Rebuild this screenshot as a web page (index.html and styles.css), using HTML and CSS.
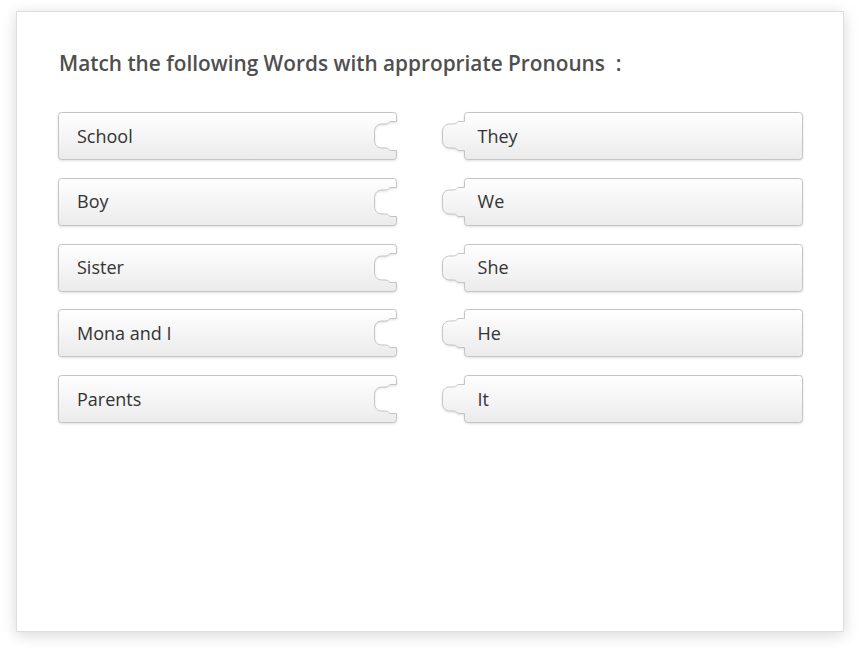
FILE: index.html
```html
<!DOCTYPE html>
<html lang="en">
<head>
<meta charset="utf-8">
<title>Match the following</title>
<link rel="stylesheet" href="styles.css">
</head>
<body>
<svg class="defs" width="0" height="0" aria-hidden="true">
  <defs>
    <linearGradient id="tileGrad" x1="0" y1="0" x2="0" y2="1">
      <stop offset="0" stop-color="#ffffff"/>
      <stop offset="1" stop-color="#ebebeb"/>
    </linearGradient>
    <path id="leftShape" d="M3.5 0.5H335.5Q338.5 0.5 338.5 3.5V9.5H333C330.5 9.5 331 12 327.5 12H324C319.5 12 316.5 15 316.5 19.5V28.5C316.5 33 319.5 36 324 36H327.5C331 36 330.5 38.5 333 38.5H338.5V44.5Q338.5 47.5 335.5 47.5H3.5Q0.5 47.5 0.5 44.5V3.5Q0.5 0.5 3.5 0.5Z"/>
    <path id="rightShape" d="M25.5 0.5H357.5Q360.5 0.5 360.5 3.5V44.5Q360.5 47.5 357.5 47.5H25.5Q22.5 47.5 22.5 44.5V38.5H17C14.5 38.5 15 36 11.5 36H8C3.5 36 0.5 33 0.5 28.5V19.5C0.5 15 3.5 12 8 12H11.5C15 12 14.5 9.5 17 9.5H22.5V3.5Q22.5 0.5 25.5 0.5Z"/>
  </defs>
</svg>
<div class="card">
  <h1 class="title">Match the following Words with appropriate Pronouns&nbsp; :</h1>
  <div class="rows">
    <div class="pair">
      <div class="tile tile-left">
        <svg class="shape" viewBox="0 0 339 48" width="339" height="48"><use href="#leftShape"/></svg>
        <span class="label">School</span>
      </div>
      <div class="tile tile-right">
        <svg class="shape" viewBox="0 0 361 48" width="361" height="48"><use href="#rightShape"/></svg>
        <span class="label">They</span>
      </div>
    </div>
    <div class="pair">
      <div class="tile tile-left">
        <svg class="shape" viewBox="0 0 339 48" width="339" height="48"><use href="#leftShape"/></svg>
        <span class="label">Boy</span>
      </div>
      <div class="tile tile-right">
        <svg class="shape" viewBox="0 0 361 48" width="361" height="48"><use href="#rightShape"/></svg>
        <span class="label">We</span>
      </div>
    </div>
    <div class="pair">
      <div class="tile tile-left">
        <svg class="shape" viewBox="0 0 339 48" width="339" height="48"><use href="#leftShape"/></svg>
        <span class="label">Sister</span>
      </div>
      <div class="tile tile-right">
        <svg class="shape" viewBox="0 0 361 48" width="361" height="48"><use href="#rightShape"/></svg>
        <span class="label">She</span>
      </div>
    </div>
    <div class="pair">
      <div class="tile tile-left">
        <svg class="shape" viewBox="0 0 339 48" width="339" height="48"><use href="#leftShape"/></svg>
        <span class="label">Mona and I</span>
      </div>
      <div class="tile tile-right">
        <svg class="shape" viewBox="0 0 361 48" width="361" height="48"><use href="#rightShape"/></svg>
        <span class="label">He</span>
      </div>
    </div>
    <div class="pair">
      <div class="tile tile-left">
        <svg class="shape" viewBox="0 0 339 48" width="339" height="48"><use href="#leftShape"/></svg>
        <span class="label">Parents</span>
      </div>
      <div class="tile tile-right">
        <svg class="shape" viewBox="0 0 361 48" width="361" height="48"><use href="#rightShape"/></svg>
        <span class="label">It</span>
      </div>
    </div>
  </div>
</div>
</body>
</html>
```

FILE: styles.css
```css
html, body {
  margin: 0;
  padding: 0;
  background: #ffffff;
}

body {
  font-family: "Open Sans", "Liberation Sans", sans-serif;
  width: 861px;
  height: 653px;
  overflow: hidden;
}

.defs {
  position: absolute;
  width: 0;
  height: 0;
}

.card {
  box-sizing: border-box;
  margin: 11px 0 0 16px;
  width: 828px;
  height: 621px;
  border: 1px solid #dedede;
  background: #ffffff;
  box-shadow: 0 3px 14px rgba(0, 0, 0, 0.16);
  padding: 0 41px;
}

.title {
  margin: 37px 0 0 1px;
  font-size: 20.8px;
  line-height: 28px;
  font-weight: 600;
  color: #4f4f4f;
  letter-spacing: 0;
}

.rows {
  margin-top: 35px;
  display: flex;
  flex-direction: column;
  gap: 17.75px;
}

.pair {
  display: flex;
  align-items: center;
  gap: 45px;
}

.tile {
  position: relative;
  height: 48px;
  display: flex;
  align-items: center;
}

.tile-left {
  width: 339px;
}

.tile-right {
  width: 361px;
}

.shape {
  position: absolute;
  left: 0;
  top: 0;
  filter: drop-shadow(0 1px 1px rgba(0, 0, 0, 0.12));
}

.shape use {
  fill: url(#tileGrad);
  stroke: #c4c4c4;
  stroke-width: 1;
}

.label {
  position: relative;
  font-size: 18px;
  color: #333333;
  line-height: 24px;
  margin-top: -1px;
}

.tile-left .label {
  padding-left: 19px;
}

.tile-right .label {
  padding-left: 36px;
}
```
